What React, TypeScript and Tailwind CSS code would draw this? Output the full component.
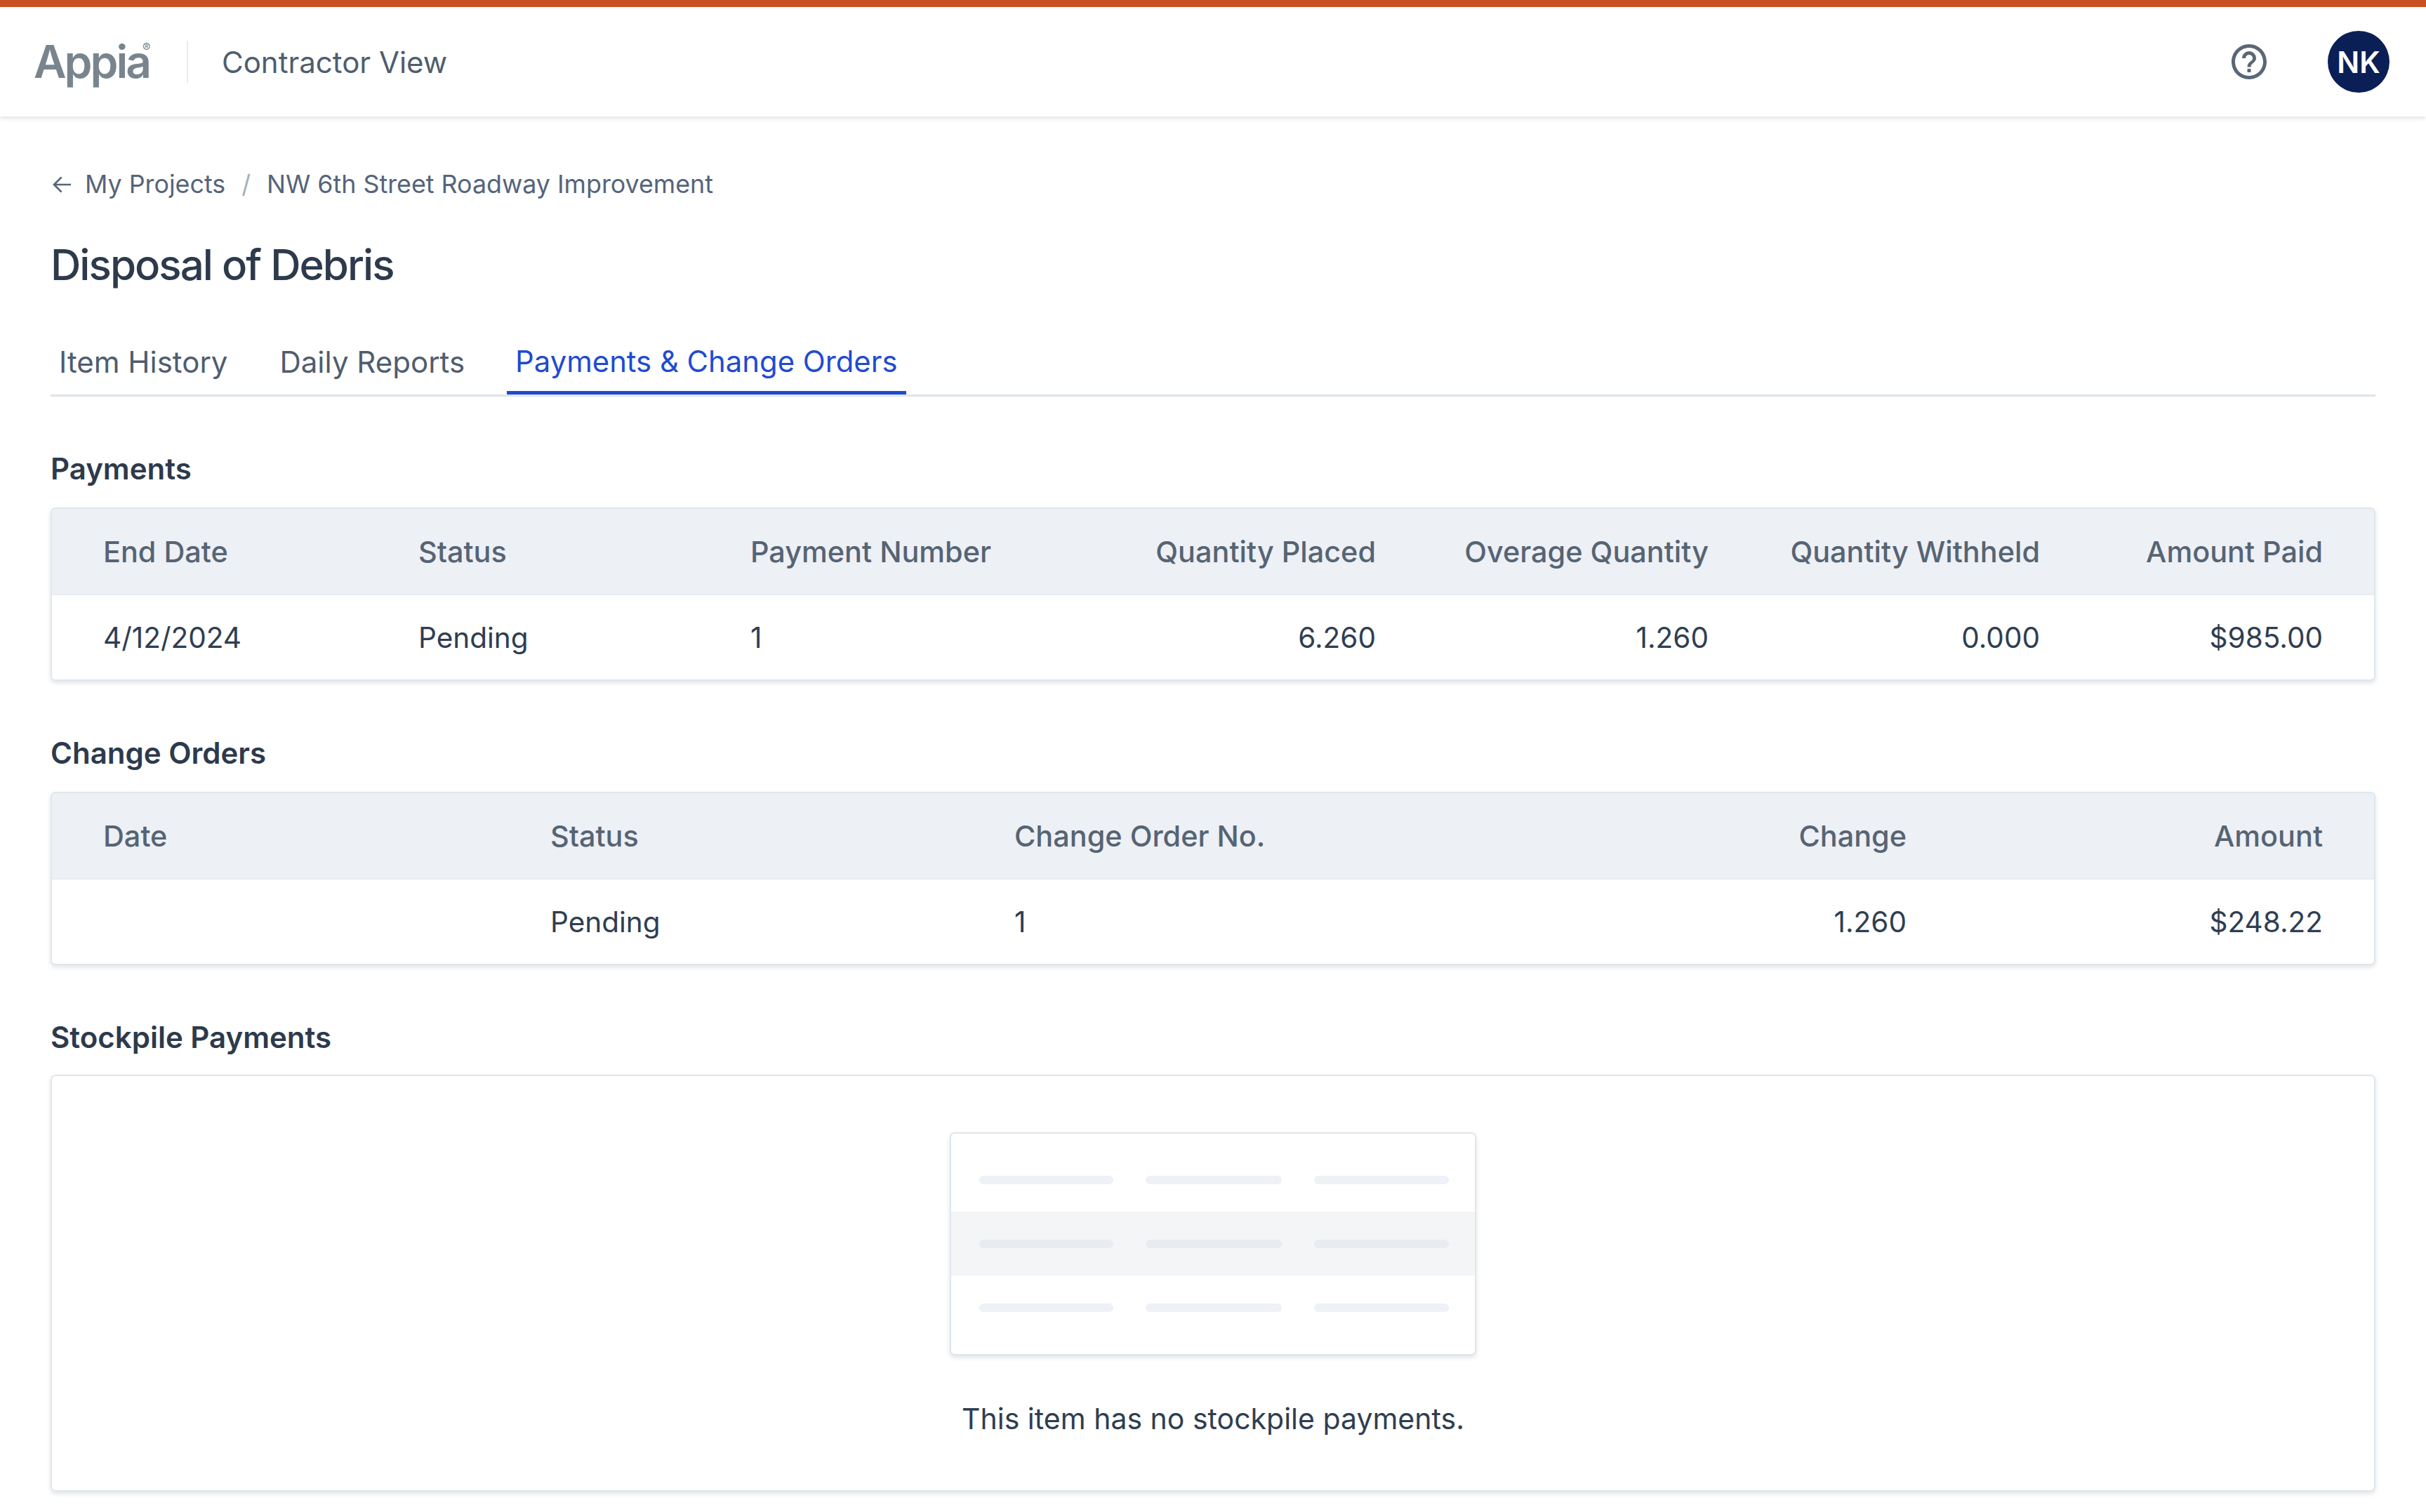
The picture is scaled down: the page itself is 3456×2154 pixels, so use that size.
const paymentCols = 'grid-cols-[449px_473px_445px_446px_474px_472px_403px]'

function SectionTitle({ children }: { children: string }) {
  return <h2 className="m-0 h-[46px] text-[42px] leading-[42px] font-semibold text-[#2d3a4c]">{children}</h2>
}

function Cell({ children, right, head }: { children?: string; right?: boolean; head?: boolean }) {
  return (
    <div className={`leading-[48px] whitespace-nowrap ${right ? 'text-right' : ''} ${head ? 'text-[41.4px] font-medium text-[#566474]' : 'text-[40.5px] text-[#2f3e50]'}`}>
      {children}
    </div>
  )
}

function DataTable({ cols, head, row, rightFrom }: { cols: string; head: string[]; row: string[]; rightFrom: number }) {
  return (
    <div className="mt-[30px] overflow-hidden rounded-[7px] border-2 border-[#dfe6ec] shadow-[0_3px_6px_rgba(45,55,72,0.14)]">
      <div className={`grid ${cols} h-[123px] items-center border-b-2 border-[#e9edf2] bg-[#edf0f5] pl-[73px]`}>
        {head.map((text, i) => (
          <Cell key={text} head right={i >= rightFrom}>{text}</Cell>
        ))}
      </div>
      <div className={`grid ${cols} h-[120px] items-center bg-white pt-[2px] pl-[73px]`}>
        {row.map((text, i) => (
          <Cell key={i} right={i >= rightFrom}>{text}</Cell>
        ))}
      </div>
    </div>
  )
}

function Lines({ tone }: { tone: string }) {
  return (
    <div className="flex h-[91px] items-center gap-[46px] pl-[40px]">
      <div className={`h-[12px] w-[191px] shrink-0 rounded-full ${tone}`} />
      <div className={`h-[12px] w-[194px] shrink-0 rounded-full ${tone}`} />
      <div className={`h-[12px] w-[192px] shrink-0 rounded-full ${tone}`} />
    </div>
  )
}

function Tab({ children, active }: { children: string; active?: boolean }) {
  return (
    <div className={`flex h-[91px] items-center border-b-[5px] px-[12px] pt-[2px] ${active ? 'ml-[-2px] border-[#1f4bd1] text-[41.8px] text-[#1f4bd1]' : 'border-transparent text-[42px] text-[#4f5d6e]'}`}>
      {children}
    </div>
  )
}

export default function App() {
  return (
    <div className="min-h-[2154px] bg-white font-['Inter',sans-serif]">
      <header className="flex h-[166px] items-center border-t-[10px] border-[#c94f21] bg-white pr-[52px] pl-[48px] shadow-[0_2px_6px_rgba(45,55,72,0.16)]">
        <div className="relative w-[168px] text-[64px] leading-[66px] font-semibold tracking-[-3px] text-[#78858f]">
          Appia
          <span className="absolute top-[3px] left-[155px] text-[17px] leading-[20px] font-normal tracking-normal">®</span>
        </div>
        <div className="ml-[50px] h-[60px] w-[2px] bg-[#eaeaea]" />
        <div className="ml-[48px] text-[42px] font-normal text-[#4f5d6e]">Contractor View</div>
        <svg className="mr-[82px] ml-auto size-[60px] text-[#5a6777]" viewBox="0 0 24 24" fill="currentColor">
          <path d="M11 18h2v-2h-2v2zm1-16C6.48 2 2 6.48 2 12s4.48 10 10 10 10-4.48 10-10S17.52 2 12 2zm0 18c-4.41 0-8-3.59-8-8s3.59-8 8-8 8 3.59 8 8-3.59 8-8 8zm0-14c-2.21 0-4 1.79-4 4h2c0-1.1.9-2 2-2s2 .9 2 2c0 2-3 1.75-3 5h2c0-2.25 3-2.5 3-5 0-2.21-1.79-4-4-4z" />
        </svg>
        <div className="flex size-[88px] items-center justify-center rounded-full bg-[#0a1f56] text-[42px] font-semibold text-white">
          NK
        </div>
      </header>

      <main className="px-[72px] pt-[75px]">
        <nav className="flex h-[44px] items-center text-[35.8px] text-[#56647a]">
          <svg className="mr-[16px] ml-[1px] size-[32px]" viewBox="0 0 24 24" fill="none" stroke="currentColor" strokeWidth="2">
            <path d="M21 12H3M11 4l-8 8 8 8" />
          </svg>
          <span>My Projects</span>
          <span className="mx-[23px] text-[#a6afba]">/</span>
          <span>NW 6th Street Roadway Improvement</span>
        </nav>

        <h1 className="m-0 mt-[57px] text-[60px] leading-[70px] font-medium tracking-[-1.95px] text-[#2d3a4c]">Disposal of Debris</h1>

        <div className="mt-[59px] flex h-[94px] gap-[50px] border-b-[3px] border-[#e0e5ea]">
          <Tab>Item History</Tab>
          <Tab>Daily Reports</Tab>
          <Tab active>Payments &amp; Change Orders</Tab>
        </div>

        <div className="mt-[82px]">
          <SectionTitle>Payments</SectionTitle>
          <DataTable
            cols={paymentCols}
            head={['End Date', 'Status', 'Payment Number', 'Quantity Placed', 'Overage Quantity', 'Quantity Withheld', 'Amount Paid']}
            row={['4/12/2024', 'Pending', '1', '6.260', '1.260', '0.000', '$985.00']}
            rightFrom={3}
          />
        </div>

        <div className="mt-[82px]">
          <SectionTitle>Change Orders</SectionTitle>
          <DataTable
            cols="grid-cols-[637px_661px_634px_637px_593px]"
            head={['Date', 'Status', 'Change Order No.', 'Change', 'Amount']}
            row={['', 'Pending', '1', '1.260', '$248.22']}
            rightFrom={3}
          />
        </div>

        <div className="mt-[82px]">
          <SectionTitle>Stockpile Payments</SectionTitle>
          <div className="mt-[28px] flex h-[594px] flex-col items-center rounded-[7px] border-2 border-[#dfe6ec] pt-[80px] shadow-[0_3px_6px_rgba(45,55,72,0.14)]">
            <div className="h-[318px] w-[750px] shrink-0 overflow-hidden rounded-[7px] border-2 border-[#e0e6ec] bg-white pt-[20px] shadow-[0_3px_6px_rgba(45,55,72,0.14)]">
              <Lines tone="bg-[#eef1f5]" />
              <div className="bg-[#f4f5f7]">
                <Lines tone="bg-[#e8ecf0]" />
              </div>
              <Lines tone="bg-[#eef1f5]" />
            </div>
            <p className="m-0 mt-[66px] text-[41px] leading-[48px] text-[#2f3e50]">This item has no stockpile payments.</p>
          </div>
        </div>
      </main>
    </div>
  )
}
